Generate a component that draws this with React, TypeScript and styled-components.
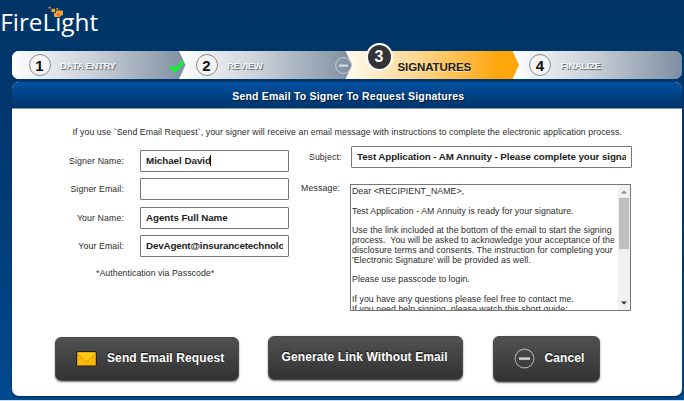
import React from "react";
import styled, { createGlobalStyle, css } from "styled-components";

const GlobalStyle = createGlobalStyle`
  *, *::before, *::after { box-sizing: border-box; }
  html, body { margin: 0; padding: 0; background: #c9def2; overflow: hidden; }
  body { font-family: "Liberation Sans", Arial, sans-serif; color: #2b2b2b; }
`;

const Page = styled.main`
  width: 684px;
  height: 400px;
  padding: 0 2.5px 0 12px;
  background: linear-gradient(#003467, #003a73 45%, #004a90);
  overflow: hidden;
`;

const LogoBar = styled.header`
  height: 51px;
  margin-left: -12px;
`;

const Steps = styled.nav`
  display: grid;
  grid-template-columns: 167px 166.5px 167px 168.5px;
  height: 28px;
  border-radius: 7px;
  background: linear-gradient(90deg, #fff 50%, #8292a5 50%);
`;

type StepKind = "plain" | "active";

const Step = styled.div<{ $kind?: StepKind; $first?: boolean; $last?: boolean; $layer: number }>`
  position: relative;
  z-index: ${(p) => p.$layer};
  display: flex;
  align-items: center;
  margin-right: ${(p) => (p.$last ? "0" : "-6.5px")};
  padding-left: ${(p) => (p.$first ? "16.5px" : p.$kind === "active" ? "20px" : "16.5px")};
  gap: ${(p) => (p.$kind === "active" ? "5px" : "9.5px")};

  &::before {
    content: "";
    position: absolute;
    z-index: -1;
    inset: 0;
    background: ${(p) =>
      p.$kind === "active"
        ? "linear-gradient(90deg, #fffaf0, #ffd58a 43%, #ffa60d 88%)"
        : "linear-gradient(90deg, #fff, #f4f6f8 8%, #ccd2da 45%, #7e8fa2)"};
    ${(p) =>
      !p.$last &&
      css`
        clip-path: polygon(0 0, calc(100% - 6.5px) 0, 100% 50%, calc(100% - 6.5px) 100%, 0 100%);
      `}
    border-radius: ${(p) => (p.$first ? "7px 0 0 7px" : p.$last ? "0 7px 7px 0" : "0")};
  }
`;

const StepNumber = styled.span<{ $active?: boolean }>`
  display: flex;
  align-items: center;
  justify-content: center;
  flex: none;
  width: ${(p) => (p.$active ? "27px" : "22px")};
  height: ${(p) => (p.$active ? "28px" : "22px")};
  margin-top: ${(p) => (p.$active ? "-17px" : "0")};
  border: ${(p) => (p.$active ? "2px solid #fff" : "1.5px solid #8c8c8c")};
  border-radius: 50%;
  background: ${(p) => (p.$active ? "#343434" : "#f4f4f4")};
  color: ${(p) => (p.$active ? "#fff" : "#111")};
  font-size: ${(p) => (p.$active ? "16px" : "15px")};
  font-weight: bold;
  line-height: 1;
`;

const StepTitle = styled.span<{ $active?: boolean }>`
  margin-top: ${(p) => (p.$active ? "3px" : "2px")};
  font-size: ${(p) => (p.$active ? "11.5px" : "9.5px")};
  font-weight: bold;
  letter-spacing: ${(p) => (p.$active ? "-0.1px" : "-0.35px")};
  line-height: 14px;
  color: ${(p) => (p.$active ? "#222" : "#f6f6f6")};
  text-shadow: ${(p) => (p.$active ? "0 1px 0 #ffe3b0" : "1px 1px 1px #5d6570")};
`;

const StepMark = styled.svg<{ $x: number; $y: number }>`
  position: absolute;
  left: ${(p) => p.$x}px;
  top: ${(p) => p.$y}px;
`;

const Panel = styled.section`
  margin-top: 3px;
  height: 313.5px;
  border-radius: 7px;
  background: #fff;
  overflow: hidden;
  box-shadow: 0 1px 2px #00264d;
`;

const PanelTitle = styled.h1`
  height: 27px;
  margin: 0;
  padding-left: 3px;
  background: linear-gradient(#0451a3, #003468);
  border-bottom: 1px solid #7f9bb9;
  color: #fff;
  font-size: 10.5px;
  line-height: 28px;
  letter-spacing: 0.2px;
  text-align: center;
  text-shadow: 1px 1px 1px #001a35;
`;

const Intro = styled.p`
  margin: 17px 0 0 60.5px;
  font-size: 8.75px;
  letter-spacing: 0.072px;
  line-height: 12px;
  white-space: nowrap;
`;

const Form = styled.form`
  display: flex;
  height: 192px;
`;

const SignerColumn = styled.div`
  display: flex;
  flex-direction: column;
  gap: 6.3px;
  width: 276.5px;
  padding-top: 12px;
`;

const MessageColumn = styled.div`
  padding-top: 8px;
`;

const FieldRow = styled.div<{ $labelWidth: number; $gap: number; $top?: boolean }>`
  display: grid;
  grid-template-columns: ${(p) => p.$labelWidth}px max-content;
  column-gap: ${(p) => p.$gap}px;
  align-items: ${(p) => (p.$top ? "start" : "center")};
  font-size: 8.75px;
  line-height: 10px;
`;

const FieldLabel = styled.span<{ $drop?: number }>`
  margin-top: ${(p) => p.$drop ?? 0}px;
  letter-spacing: 0.12px;
  text-align: right;
  white-space: nowrap;
`;

const Field = styled.div<{ $width: number }>`
  display: flex;
  align-items: center;
  width: ${(p) => p.$width}px;
  height: 22px;
  padding: 0 5px;
  border: 1px solid #777;
  border-radius: 1px;
  background: #fff;
  color: #1c1c1c;
  font-size: 9.8px;
  font-weight: bold;
  line-height: 18px;
`;

const FieldValue = styled.span<{ $spacing?: number }>`
  flex: 1;
  overflow: hidden;
  white-space: nowrap;
  letter-spacing: ${(p) => p.$spacing ?? 0}px;
`;

const Caret = styled.span`
  display: inline-block;
  width: 1px;
  height: 11px;
  margin-left: -1px;
  background: #111;
  vertical-align: -2px;
`;

const AuthNote = styled.p`
  margin: 4px 0 0 84px;
  font-size: 8.75px;
  letter-spacing: 0.05px;
  line-height: 12px;
`;

const MessageBox = styled.div`
  display: flex;
  width: 281px;
  height: 127px;
  margin-top: 16px;
  border: 1px solid #777;
  background: #fff;
  overflow: hidden;
`;

const MessageText = styled.div`
  flex: 1;
  padding: 2px 0 0 1px;
  font-size: 8.75px;
  letter-spacing: 0.055px;
  line-height: 9.8px;
  white-space: pre;
`;

const ScrollBar = styled.div`
  display: flex;
  flex-direction: column;
  align-items: center;
  width: 12px;
  background: #f1f1f1;
`;

const ScrollArrow = styled.svg<{ $end?: boolean }>`
  flex: none;
  margin-top: ${(p) => (p.$end ? "auto" : "0")};
`;

const ScrollThumb = styled.div`
  width: 10px;
  height: 51px;
  background: #bfbfbf;
`;

const Actions = styled.div`
  display: flex;
  align-items: flex-start;
  padding: 5.5px 0 0 43px;
`;

const ActionButton = styled.button<{ $width: number; $height: number; $indent: number; $before?: number; $drop?: number }>`
  display: flex;
  align-items: center;
  width: ${(p) => p.$width}px;
  height: ${(p) => p.$height}px;
  margin: ${(p) => p.$drop ?? 0}px 0 0 ${(p) => p.$before ?? 0}px;
  padding: 0 0 0 ${(p) => p.$indent}px;
  border: 1px solid #4a4a4a;
  border-radius: 6px;
  background: linear-gradient(#515151, #323232);
  box-shadow: 0 1px 2px #777;
  color: #fff;
  font-family: inherit;
  font-size: 12px;
  font-weight: bold;
  letter-spacing: 0.11px;
  line-height: 16px;
  white-space: nowrap;
  text-shadow: 0 -1px 1px #151515;
`;

const ButtonText = styled.span<{ $gap?: number }>`
  margin: -1px 0 0 ${(p) => p.$gap ?? 0}px;
`;

const Logo = () => (
  <svg width="110" height="51" viewBox="0 0 110 51" aria-label="FireLight">
    <text x="0.2" y="31" fill="#fff" fontFamily="Open Sans, sans-serif" fontSize="23" textLength="98" lengthAdjust="spacingAndGlyphs">
      FireLight
    </text>
    <rect x="55.5" y="9.8" width="7" height="7.8" fill="#003467" />
    <g fill="#f7a336">
      <rect x="48.6" y="6.8" width="2" height="1.8" rx=".5" />
      <rect x="51.4" y="8.8" width="3.8" height="3.4" rx="1" />
      <rect x="56.4" y="8" width="1.8" height="1.8" rx=".5" />
      <rect x="56" y="10.4" width="7" height="5" rx="1" />
      <rect x="54" y="12.8" width="6.5" height="4.2" rx="1" />
    </g>
    <rect x="57" y="13.2" width="2.8" height="2.3" rx=".6" fill="#f05a28" />
  </svg>
);

const Envelope = () => (
  <svg width="21" height="16" viewBox="0 0 21 16">
    <rect x=".6" y=".6" width="19.8" height="14.6" rx="1.2" fill="#ffb60a" stroke="#222" strokeWidth="1.2" />
    <path d="M1.4 1.4H19.6L12 9.8Q10.4 11.2 8.8 9.8Z" fill="#ffcb12" />
    <path d="M2.4 3.4L8.8 9.8Q10.4 11.2 12 9.8L18.6 3.4" fill="none" stroke="#d19300" strokeWidth=".8" />
  </svg>
);

const MinusCircle = () => (
  <svg width="21" height="21" viewBox="0 0 21 21">
    <circle cx="10.5" cy="10.5" r="9.4" fill="none" stroke="#a5a5a5" strokeWidth="1.1" />
    <rect x="5" y="9.4" width="11" height="2.4" fill="#d8d8d8" />
  </svg>
);

const message = `Dear <RECIPIENT_NAME>,

Test Application - AM Annuity is ready for your signature.

Use the link included at the bottom of the email to start the signing
process.  You will be asked to acknowledge your acceptance of the
disclosure terms and consents. The instruction for completing your
'Electronic Signature' will be provided as well.

Please use passcode to login.

If you have any questions please feel free to contact me.
If you need help signing, please watch this short guide:`;

const signerFields = [
  { label: "Signer Name:", value: "Michael David", spacing: -0.03, caret: true },
  { label: "Signer Email:", value: "" },
  { label: "Your Name:", value: "Agents Full Name", spacing: -0.07 },
  { label: "Your Email:", value: "DevAgent@insurancetechnologies.com", spacing: -0.16 },
];

export default function App() {
  return (
    <>
      <GlobalStyle />
      <Page>
        <LogoBar>
          <Logo />
        </LogoBar>
        <Steps>
          <Step $first $layer={4}>
            <StepNumber>1</StepNumber>
            <StepTitle>DATA ENTRY</StepTitle>
            <StepMark $x={157} $y={8} width="15" height="15" viewBox="0 0 15 15">
              <path d="M.3 8L3.8 6.4L5.7 9.4L14 .5L14.8 4.5L6 14.2Z" fill="#0df52c" />
            </StepMark>
          </Step>
          <Step $layer={3}>
            <StepNumber>2</StepNumber>
            <StepTitle>REVIEW</StepTitle>
            <StepMark $x={155.5} $y={6} width="17" height="17" viewBox="0 0 17 17">
              <circle cx="8.5" cy="8.5" r="7.9" fill="none" stroke="#c8ccd1" />
              <rect x="4" y="7.6" width="9" height="2" fill="#dde0e4" />
            </StepMark>
          </Step>
          <Step $kind="active" $layer={2}>
            <StepNumber $active>3</StepNumber>
            <StepTitle $active>SIGNATURES</StepTitle>
          </Step>
          <Step $last $layer={1}>
            <StepNumber>4</StepNumber>
            <StepTitle>FINALIZE</StepTitle>
          </Step>
        </Steps>
        <Panel>
          <PanelTitle>Send Email To Signer To Request Signatures</PanelTitle>
          <Intro>
            If you use `Send Email Request`, your signer will receive an email message with instructions to complete the
            electronic application process.
          </Intro>
          <Form>
            <SignerColumn>
              {signerFields.map((field) => (
                <FieldRow key={field.label} $labelWidth={112} $gap={16}>
                  <FieldLabel>{field.label}</FieldLabel>
                  <Field $width={149}>
                    <FieldValue $spacing={field.spacing}>
                      {field.value}
                      {field.caret && <Caret />}
                    </FieldValue>
                  </Field>
                </FieldRow>
              ))}
              <AuthNote>*Authentication via Passcode*</AuthNote>
            </SignerColumn>
            <MessageColumn>
              <FieldRow $labelWidth={53} $gap={9.5}>
                <FieldLabel>Subject:</FieldLabel>
                <Field $width={281}>
                  <FieldValue $spacing={-0.09}>
                    Test Application - AM Annuity - Please complete your signature
                  </FieldValue>
                </Field>
              </FieldRow>
              <FieldRow $labelWidth={51.5} $gap={10} $top>
                <FieldLabel $drop={15}>Message:</FieldLabel>
                <MessageBox>
                  <MessageText>{message}</MessageText>
                  <ScrollBar>
                    <ScrollArrow width="12" height="13" viewBox="0 0 12 13">
                      <path d="M3 8.5L6 5.5L9 8.5Z" fill="#8a8a8a" />
                    </ScrollArrow>
                    <ScrollThumb />
                    <ScrollArrow $end width="12" height="13" viewBox="0 0 12 13">
                      <path d="M3 4.5L6 7.5L9 4.5Z" fill="#333" />
                    </ScrollArrow>
                  </ScrollBar>
                </MessageBox>
              </FieldRow>
            </MessageColumn>
          </Form>
          <Actions>
            <ActionButton $width={184} $height={44} $indent={20} $drop={1}>
              <Envelope />
              <ButtonText $gap={10}>Send Email Request</ButtonText>
            </ActionButton>
            <ActionButton $width={195} $height={44} $indent={13} $before={28.5}>
              <ButtonText>Generate Link Without Email</ButtonText>
            </ActionButton>
            <ActionButton $width={107} $height={46} $indent={20} $before={30}>
              <MinusCircle />
              <ButtonText $gap={10}>Cancel</ButtonText>
            </ActionButton>
          </Actions>
        </Panel>
      </Page>
    </>
  );
}
